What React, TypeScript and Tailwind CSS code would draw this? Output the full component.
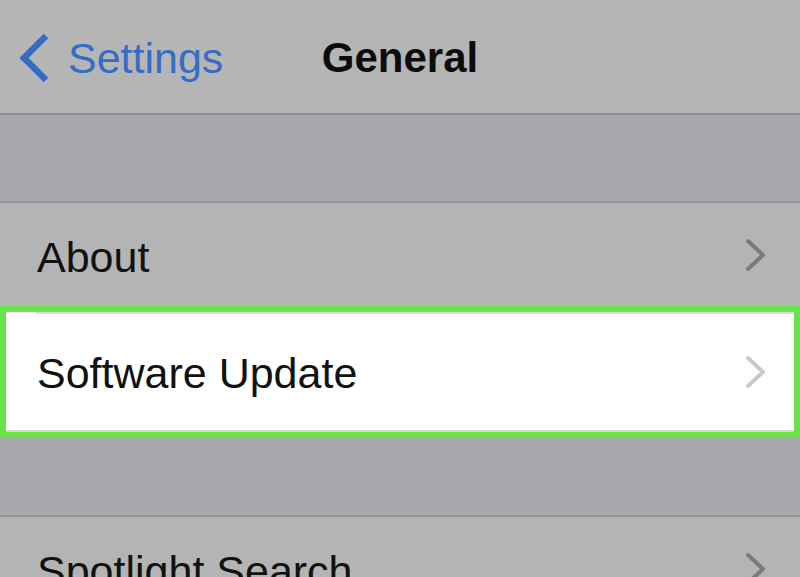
function Chevron({ className }: { className: string }) {
  return (
    <svg width="22" height="34" viewBox="0 0 22 34" className={className}>
      <path d="M3 3 L18 17 L3 31" fill="none" stroke="currentColor" strokeWidth="4" strokeLinecap="round" strokeLinejoin="round" />
    </svg>
  );
}

function Row({ label, muted }: { label: string; muted?: boolean }) {
  return (
    <div className={`flex items-center justify-between h-full ${muted ? "pl-[31px] pr-[27px]" : "pl-[37px] pr-[33px]"}`}>
      <span className={`text-[43px] leading-none text-[#111] ${muted ? "pt-[2px]" : "pt-[6px]"}`}>{label}</span>
      <Chevron className={muted ? "text-[#c9c9cc]" : "text-[#7a7a7c]"} />
    </div>
  );
}

export default function App() {
  return (
    <div className="w-[800px] h-[577px] overflow-hidden bg-[#a9a8ad]" style={{ fontFamily: '"Liberation Sans", Arial, sans-serif' }}>
      {/* nav bar */}
      <header className="h-[115px] bg-[#b5b5b5] border-b-2 border-[#8e8e8e] grid grid-cols-[1fr_auto_1fr] items-center">
        <div className="flex items-center pl-[18px] pt-[3px]">
          <svg width="34" height="52" viewBox="0 0 34 52" className="text-[#356dc6]">
            <path d="M28 4 L6 26 L28 48" fill="none" stroke="currentColor" strokeWidth="6.5" strokeLinecap="butt" strokeLinejoin="miter" />
          </svg>
          <span className="ml-[16px] text-[43px] leading-none text-[#356dc6]">Settings</span>
        </div>
        <h1 className="text-[42px] leading-none font-bold text-[#0c0c0c] pt-[3px]">General</h1>
        <div />
      </header>

      {/* section gap */}
      <div className="h-[88px] border-b-2 border-[#929195]" />

      <div className="h-[103px] bg-[#b4b4b4]">
        <Row label="About" />
      </div>

      {/* highlighted row */}
      <div className="h-[132px] border-[6px] border-[#67e447] bg-white flex flex-col">
        <div className="h-[2px] ml-[30px] bg-[#dcdcdc]" />
        <div className="flex-1">
          <Row label="Software Update" muted />
        </div>
        <div className="h-[2px] bg-[#d6d6d6]" />
      </div>

      <div className="h-[79px] border-b-2 border-[#929195]" />

      <div className="h-[103px] bg-[#b4b4b4]">
        <Row label="Spotlight Search" />
      </div>
    </div>
  );
}
